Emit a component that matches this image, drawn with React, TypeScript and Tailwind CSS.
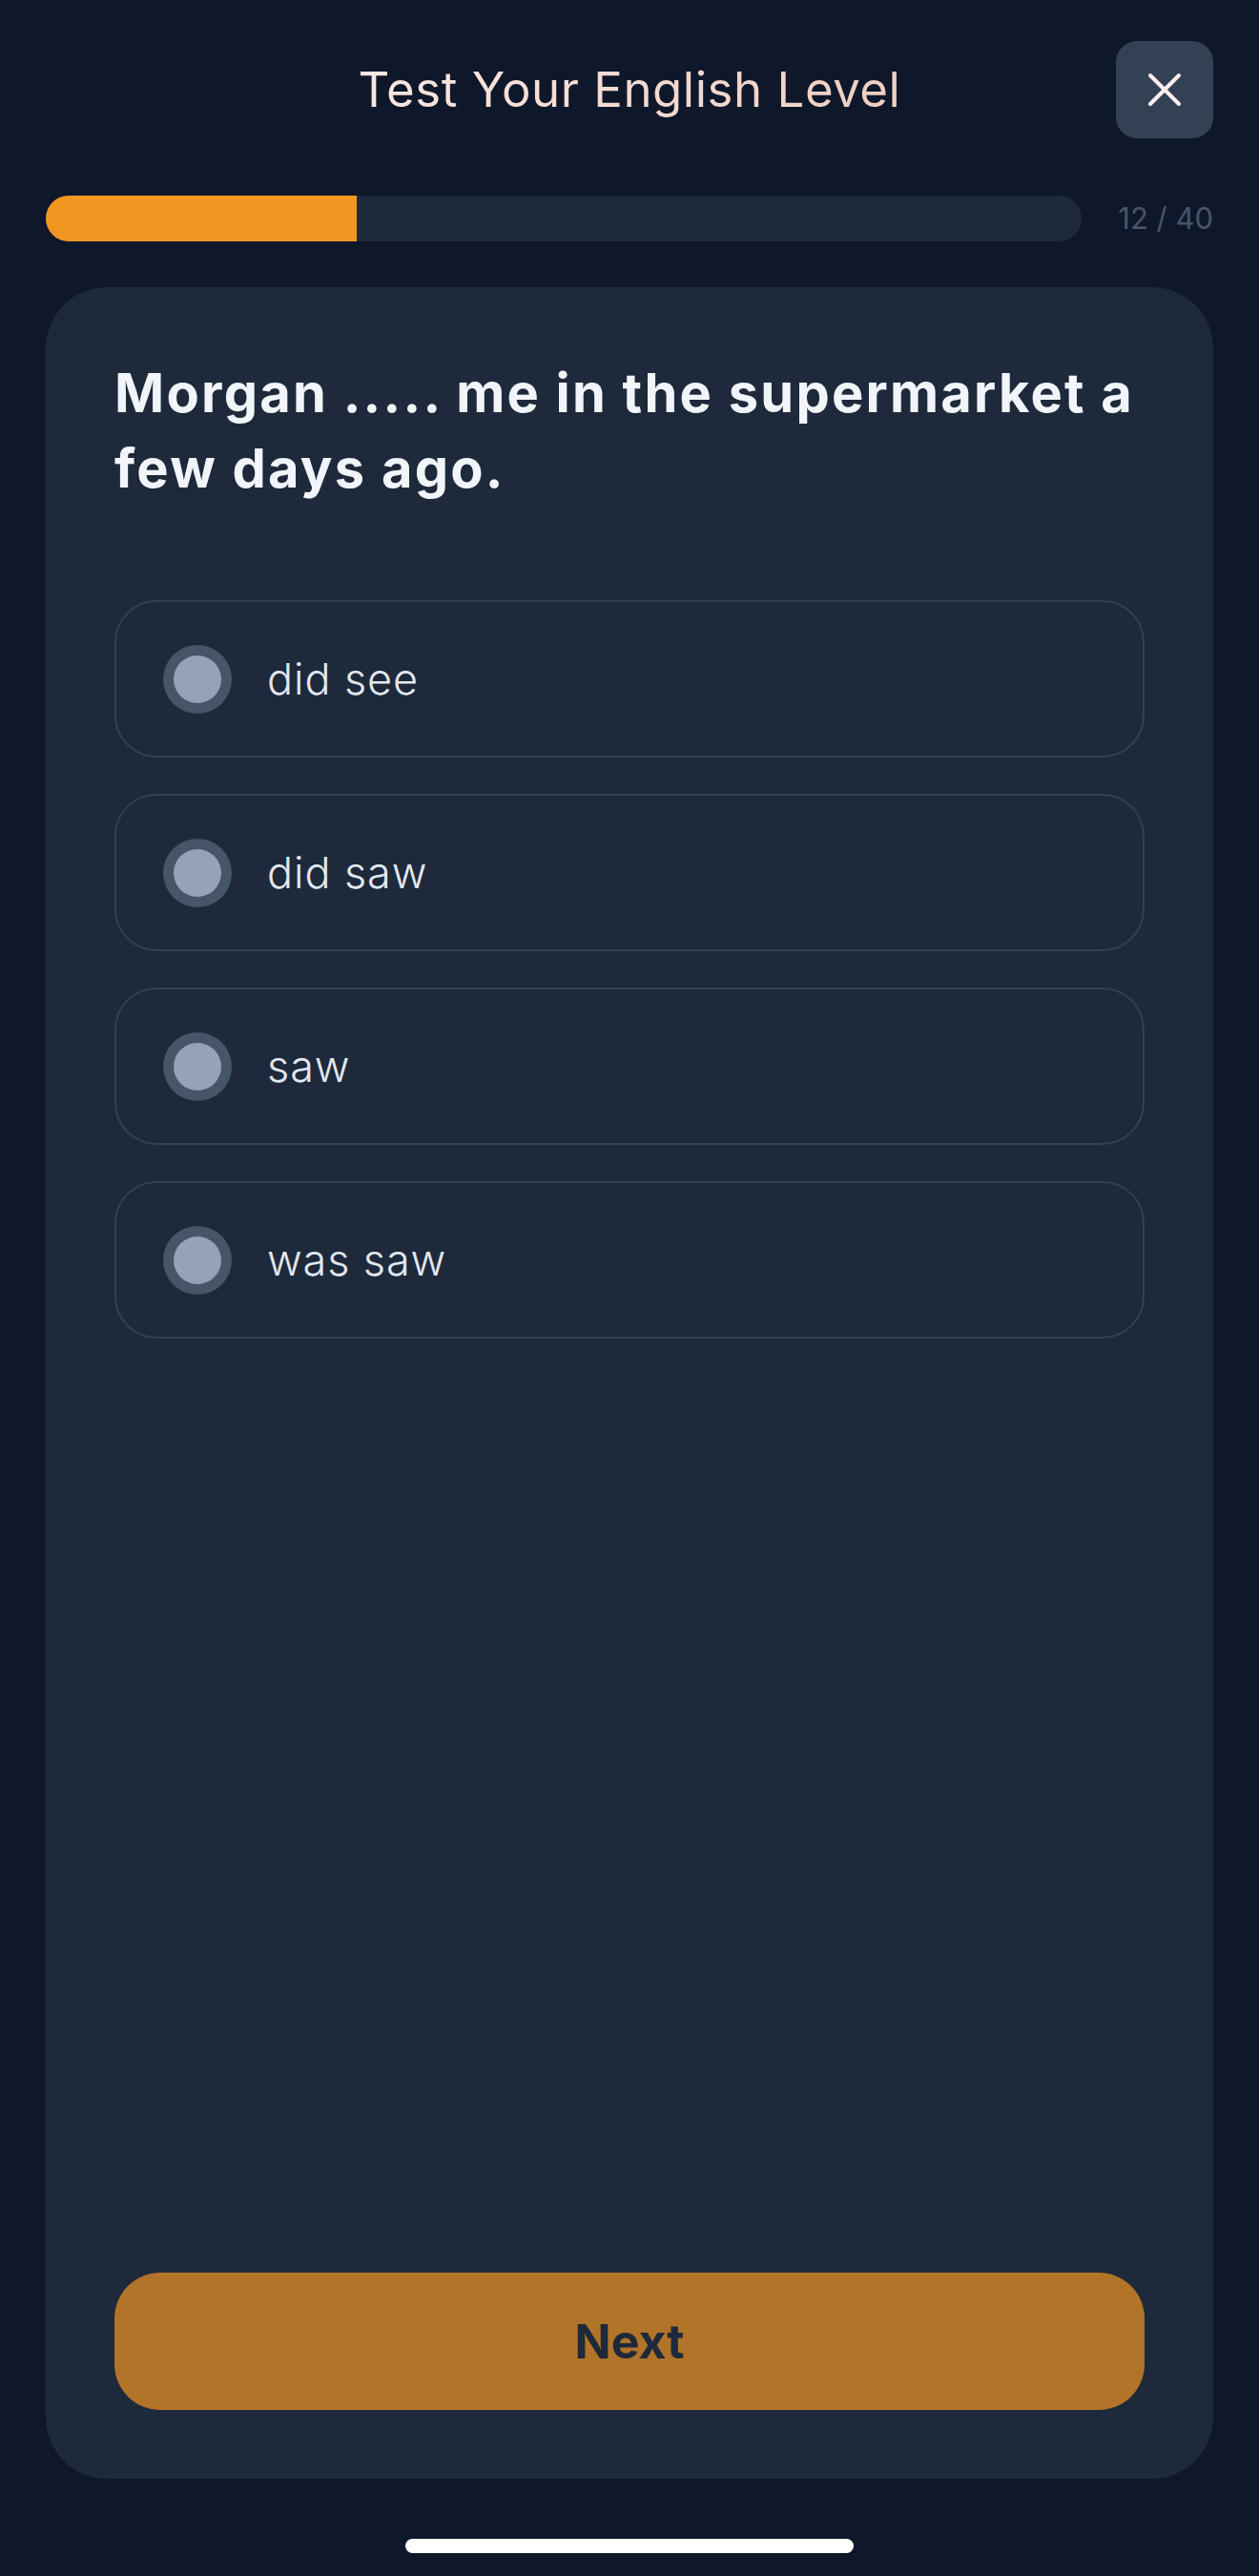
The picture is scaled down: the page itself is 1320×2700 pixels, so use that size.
import { X } from 'lucide-react';

const options = ['did see', 'did saw', 'saw', 'was saw'];

function Option({ label }: { label: string }) {
  return (
    <div className="flex h-[165px] items-center gap-[37px] rounded-[44px] border-2 border-[#334155] pl-[49px]">
      <div className="flex h-[72px] w-[72px] items-center justify-center rounded-full bg-[#475569]">
        <div className="h-[50px] w-[50px] rounded-full bg-[#94a3b8]" />
      </div>
      <span className="text-[45px] font-light tracking-[0.02em] text-[#e2e8f0]">{label}</span>
    </div>
  );
}

export default function App() {
  const current = 12;
  const total = 40;

  return (
    <div
      className="flex h-[2700px] w-full flex-col bg-[#0f172a] px-[48px]"
      style={{ fontFamily: 'Inter, "Noto Sans", sans-serif' }}
    >
      {/* header */}
      <div className="mt-[43px] grid h-[102px] grid-cols-[102px_1fr_102px] items-center">
        <div />
        <h1 className="bg-gradient-to-r from-[#fdf0ee] to-[#e9c6b6] bg-clip-text text-center text-[51px] font-normal tracking-[0.01em] text-transparent">
          Test Your English Level
        </h1>
        <button className="flex h-[102px] w-[102px] items-center justify-center rounded-[22px] bg-[#334155]">
          <X size={60} strokeWidth={1.6} className="text-[#fdeeee]" />
        </button>
      </div>

      {/* progress */}
      <div className="mt-[60px] flex items-center gap-[38px]">
        <div className="h-[48px] flex-1 overflow-hidden rounded-full bg-[#1e293b]">
          <div className="h-full bg-[#f39621]" style={{ width: `${(current / total) * 100}%` }} />
        </div>
        <span className="text-[31px] text-[#475569]">
          {current} / {total}
        </span>
      </div>

      {/* card */}
      <div className="mt-[48px] flex flex-1 flex-col rounded-[64px] bg-[#1e293b] p-[72px]">
        <h2 className="text-[56px] font-bold leading-[79px] tracking-[0.04em] text-[#f1f5f9]">
          Morgan ..... me in the supermarket a few days ago.
        </h2>

        <div className="mt-[98px] flex flex-col gap-[38px]">
          {options.map((o) => (
            <Option key={o} label={o} />
          ))}
        </div>

        <button className="mt-auto h-[144px] rounded-[48px] bg-[#b27428] text-[50px] font-bold text-[#1e293b]">
          Next
        </button>
      </div>

      {/* home indicator */}
      <div className="flex h-[102px] justify-center">
        <div className="mt-[63px] h-[15px] w-[470px] rounded-full bg-white" />
      </div>
    </div>
  );
}
